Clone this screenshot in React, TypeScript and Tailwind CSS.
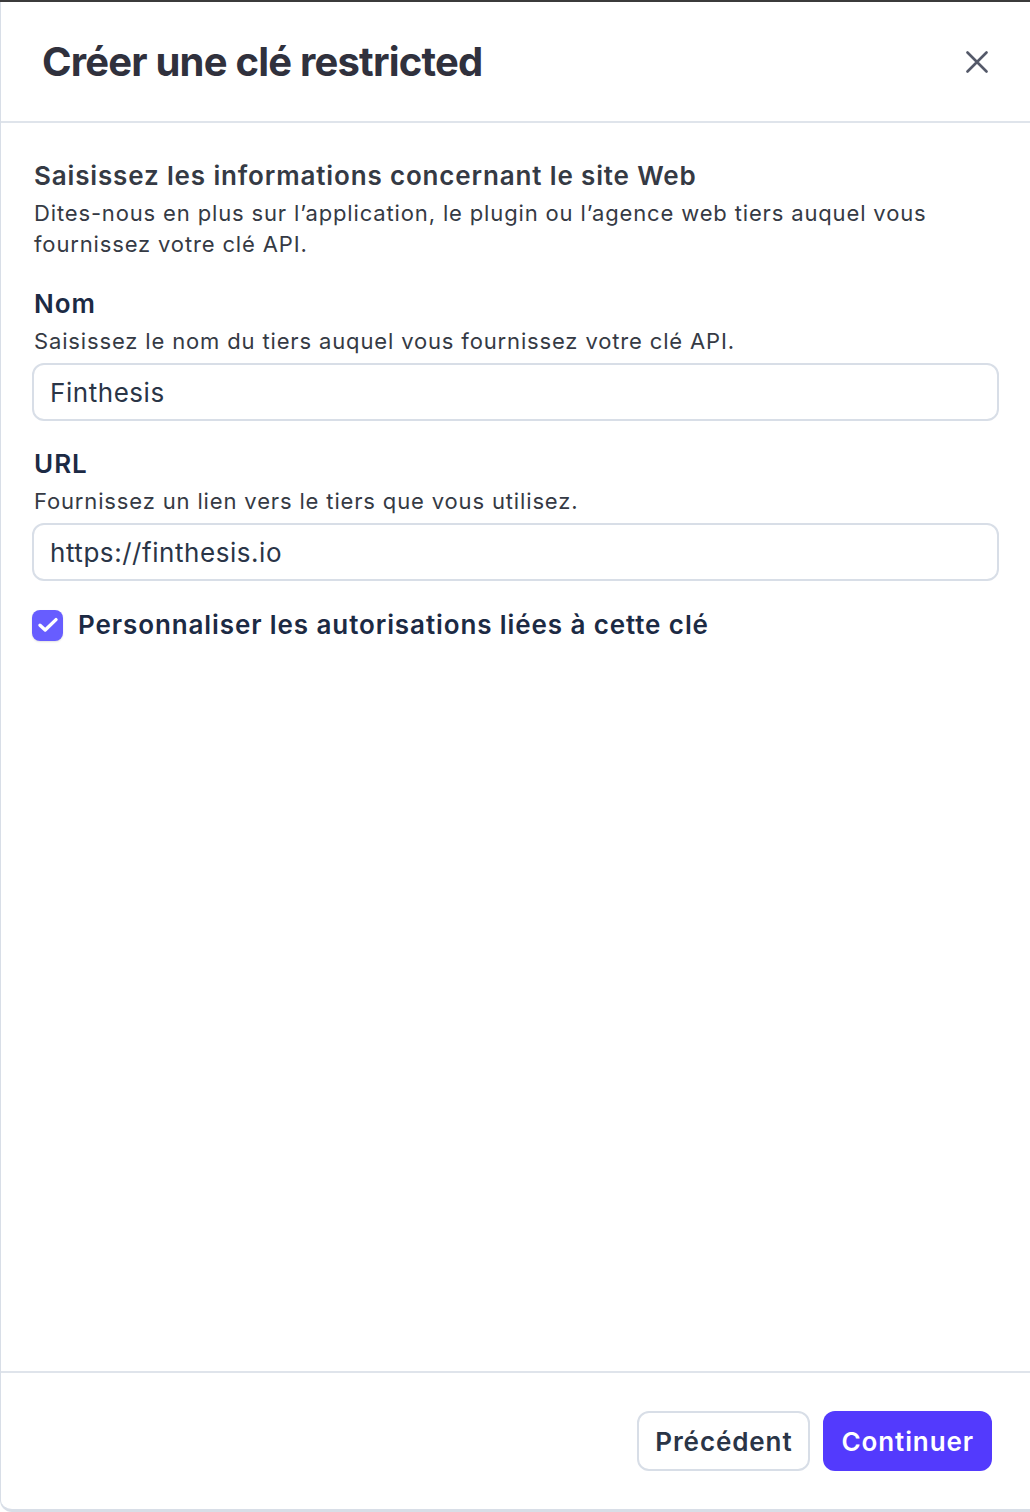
import React from "react";

export default function App() {
  return (
    <div
      className="w-[1030px] h-[1512px] flex flex-col bg-white overflow-hidden"
      style={{ fontFamily: "Inter, 'Noto Sans', sans-serif" }}
    >
      <div className="h-[2px] bg-[#3b3b3b] shrink-0" />
      <div className="flex-1 flex flex-col border-l border-b-[3px] border-[#d8dee7] rounded-bl-[12px] min-h-0">
        {/* Header */}
        <div className="h-[121px] shrink-0 flex items-center justify-between pl-[41px] pr-[41px] border-b-2 border-[#dfe4eb]">
          <h1 className="text-[40px] leading-[48px] font-bold text-[#30313d] tracking-[-0.8px]">
            Créer une clé restricted
          </h1>
          <button className="w-[24px] h-[24px] flex items-center justify-center text-[#545969]">
            <svg width="22" height="22" viewBox="0 0 22 22" fill="none">
              <path d="M1.5 1.5L20.5 20.5M20.5 1.5L1.5 20.5" stroke="currentColor" strokeWidth="2.6" strokeLinecap="round" />
            </svg>
          </button>
        </div>

        {/* Body */}
        <div className="flex-1 flex flex-col pl-[31px] pr-[31px] pt-[37px]">
          <div className="pl-[2px] text-[26px] leading-[32px] font-semibold text-[#353a44] tracking-[0.85px]">
            Saisissez les informations concernant le site Web
          </div>
          <p className="pl-[2px] mt-[6px] text-[22px] leading-[31px] text-[#353a44] tracking-[0.85px]">
            Dites-nous en plus sur l’application, le plugin ou l’agence web tiers auquel vous fournissez votre clé API.
          </p>

          <div className="pl-[2px] mt-[28px] text-[26px] leading-[32px] font-semibold text-[#1c2a44] tracking-[1px]">Nom</div>
          <p className="pl-[2px] mt-[6px] text-[22px] leading-[31px] text-[#353a44] tracking-[0.85px]">
            Saisissez le nom du tiers auquel vous fournissez votre clé API.
          </p>
          <div className="mt-[6px] h-[58px] rounded-[12px] border-2 border-[#d8dee7] flex items-center px-[16px] text-[26px] text-[#2a3547] tracking-[0.55px]">
            Finthesis
          </div>

          <div className="pl-[2px] mt-[27px] text-[26px] leading-[32px] font-semibold text-[#1c2a44] tracking-[1px]">URL</div>
          <p className="pl-[2px] mt-[6px] text-[22px] leading-[31px] text-[#353a44] tracking-[0.85px]">
            Fournissez un lien vers le tiers que vous utilisez.
          </p>
          <div className="mt-[6px] h-[58px] rounded-[12px] border-2 border-[#d8dee7] flex items-center px-[16px] text-[26px] text-[#2a3547] tracking-[0.55px]">
            https://finthesis.io
          </div>

          <div className="mt-[28px] flex items-center gap-[15px]">
            <div className="w-[31px] h-[31px] rounded-[8px] bg-[#675dff] flex items-center justify-center shrink-0 shadow-[0_1px_2px_rgba(0,0,0,0.12)]">
              <svg width="22" height="18" viewBox="0 0 22 18" fill="none">
                <path d="M3 9.2L8.2 14L19 3.6" stroke="white" strokeWidth="3.4" strokeLinecap="round" strokeLinejoin="round" />
              </svg>
            </div>
            <span className="text-[26px] leading-[32px] font-semibold text-[#1c2a44] tracking-[0.9px]">
              Personnaliser les autorisations liées à cette clé
            </span>
          </div>
        </div>

        {/* Footer */}
        <div className="h-[138px] shrink-0 border-t-2 border-[#dfe4eb] flex items-center justify-end gap-[13px] pr-[38px]">
          <button className="h-[60px] px-[16px] rounded-[12px] border-2 border-[#d8dee7] bg-white text-[26px] font-semibold text-[#2a3547] tracking-[0.9px]">
            Précédent
          </button>
          <button className="h-[60px] px-[18px] rounded-[12px] bg-[#533afd] text-[26px] font-semibold text-white tracking-[0.9px]">
            Continuer
          </button>
        </div>
      </div>
    </div>
  );
}
